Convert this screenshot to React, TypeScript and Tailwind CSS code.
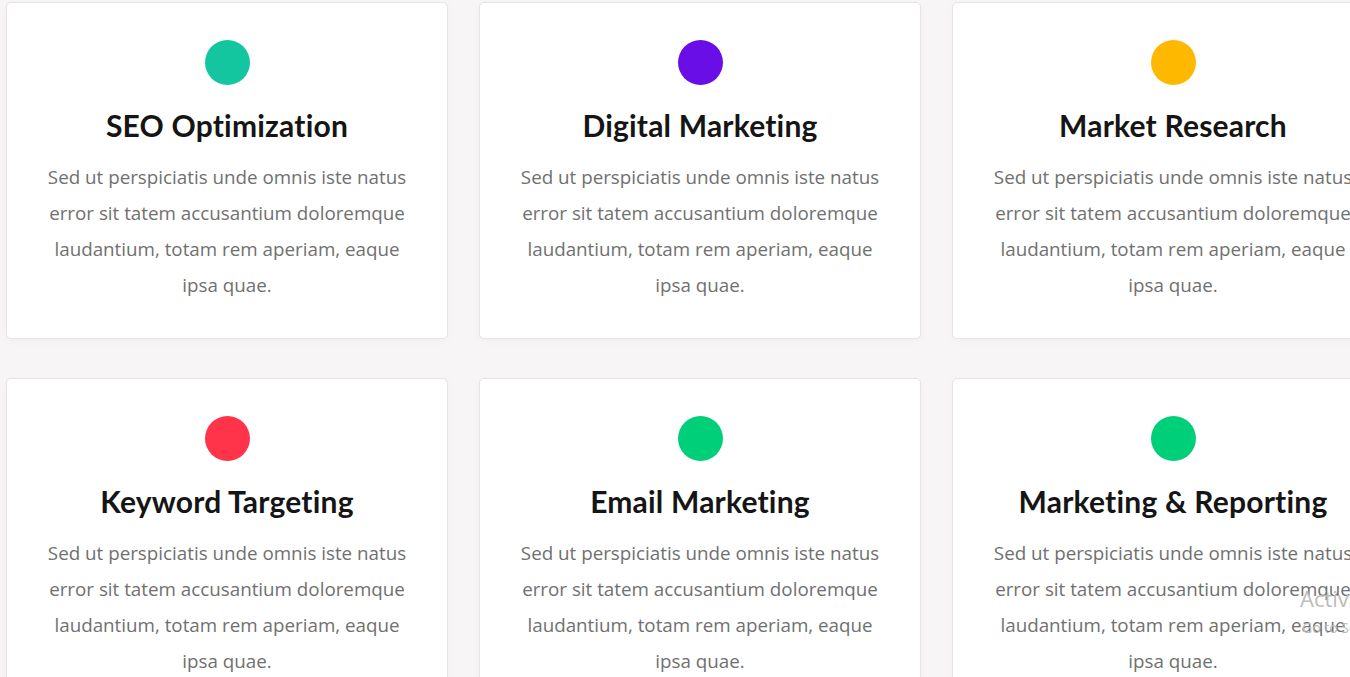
const services = [
  { title: 'SEO Optimization', color: 'bg-[#13c6a0]' },
  { title: 'Digital Marketing', color: 'bg-[#6a0ee8]' },
  { title: 'Market Research', color: 'bg-[#ffb800]' },
  { title: 'Keyword Targeting', color: 'bg-[#ff344a]' },
  { title: 'Email Marketing', color: 'bg-[#00cf7a]' },
  { title: 'Marketing & Reporting', color: 'bg-[#00cf7a]' },
];

const body =
  'Sed ut perspiciatis unde omnis iste natus error sit tatem accusantium doloremque laudantium, totam rem aperiam, eaque ipsa quae.';

const ServiceCard = ({ title, color }: { title: string; color: string }) => (
  <div className="bg-white border border-[#e6e4e4] rounded-[5px] shadow-[0_2px_10px_rgba(0,0,0,0.03)] pt-[37px] pb-[35px] px-[34px] flex flex-col items-center text-center">
    <div className={`w-[45px] h-[45px] rounded-full ${color}`} />
    <h3 className="mt-[22px] text-[30px] leading-[36px] font-bold text-[#151515] font-['Lato',sans-serif] whitespace-nowrap tracking-[0.2px]">
      {title}
    </h3>
    <p className="mt-[16px] text-[18.8px] leading-[36px] text-[#707070] font-['Open_Sans',sans-serif]">{body}</p>
  </div>
);

export default function App() {
  return (
    <div className="relative min-h-[677px] h-[677px] overflow-hidden bg-[#f7f5f5] pl-[6px] pt-[2px]">
      <div className="grid grid-cols-[442px_442px_442px] gap-x-[31px] gap-y-[39px] w-max">
        {services.map((s) => (
          <ServiceCard key={s.title} {...s} />
        ))}
      </div>
      <div className="absolute left-[1300px] top-[584px] text-[22px] leading-[28px] text-[#bdbdbd] font-['Open_Sans',sans-serif] whitespace-nowrap">
        Activate Windows
        <div className="mt-[6px] text-[14px] leading-[20px] ml-[2px]">Go to Settings to activate Windows.</div>
      </div>
    </div>
  );
}
